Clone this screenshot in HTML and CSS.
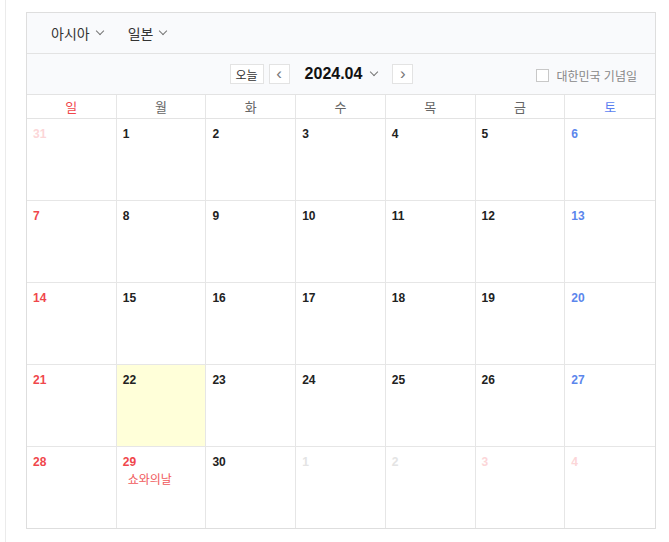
FILE: index.html
```html
<!DOCTYPE html>
<html>
    <head>
        <meta charset="UTF-8">
        <meta name="viewport" content="width=device-width, initial-scale=1.0">
        <link rel="stylesheet" href="styles.css">
        <title>달력</title>
    </head>
    <body>
        <div class="page">
            <div class="calendar">

                <!-- region selectors -->
                <div class="region-bar">
                    <span class="select">아시아 <i class="caret"></i></span>
                    <span class="select">일본 <i class="caret"></i></span>
                </div>

                <!-- month navigation -->
                <div class="nav-bar">
                    <div class="nav-left">
                        <button class="btn today">오늘</button>
                    </div>
                    <div class="nav-mid">
                        <button class="btn arrow">&lsaquo;</button>
                        <span class="month">2024.04 <i class="caret"></i></span>
                        <button class="btn arrow">&rsaquo;</button>
                    </div>
                    <div class="nav-right">
                        <label class="check"><span class="box"></span>대한민국 기념일</label>
                    </div>
                </div>

                <div class="weekdays">
                    <div class="sun">일</div>
                    <div>월</div>
                    <div>화</div>
                    <div>수</div>
                    <div>목</div>
                    <div>금</div>
                    <div class="sat">토</div>
                </div>

                <div class="days">
                    <div class="day sun other">31</div>
                    <div class="day">1</div>
                    <div class="day">2</div>
                    <div class="day">3</div>
                    <div class="day">4</div>
                    <div class="day">5</div>
                    <div class="day sat">6</div>

                    <div class="day sun">7</div>
                    <div class="day">8</div>
                    <div class="day">9</div>
                    <div class="day">10</div>
                    <div class="day">11</div>
                    <div class="day">12</div>
                    <div class="day sat">13</div>

                    <div class="day sun">14</div>
                    <div class="day">15</div>
                    <div class="day">16</div>
                    <div class="day">17</div>
                    <div class="day">18</div>
                    <div class="day">19</div>
                    <div class="day sat">20</div>

                    <div class="day sun">21</div>
                    <div class="day today-cell">22</div>
                    <div class="day">23</div>
                    <div class="day">24</div>
                    <div class="day">25</div>
                    <div class="day">26</div>
                    <div class="day sat">27</div>

                    <div class="day sun">28</div>
                    <div class="day holiday">29<span class="event">쇼와의날</span></div>
                    <div class="day">30</div>
                    <div class="day other">1</div>
                    <div class="day other">2</div>
                    <div class="day other holiday">3</div>
                    <div class="day other holiday">4</div>
                </div>
            </div>
        </div>
    </body>
</html>
```

FILE: styles.css
```css
* {
    box-sizing: border-box;
}

body {
    margin: 0;
    padding-left: 5px;
    background-color: #fff;
    color: #222;
    font-family: "Liberation Sans", "Noto Sans CJK KR", sans-serif;
}

.page {
    border-left: 1px solid #ebebeb;
    padding: 12px 0 14px 20px;
    min-height: 542px;
}

.calendar {
    width: 630px;
    border: 1px solid #dedede;
}

/* top selectors */
.region-bar {
    height: 41px;
    display: flex;
    align-items: center;
    gap: 25px;
    padding-left: 24px;
    background-color: #f9fafc;
    border-bottom: 1px solid #e3e3e3;
    font-size: 14px;
    color: #333;
}

.select {
    display: flex;
    align-items: center;
    gap: 7px;
}

.caret {
    display: inline-block;
    width: 6px;
    height: 6px;
    border-right: 1px solid #777;
    border-bottom: 1px solid #777;
    transform: rotate(45deg);
    margin-top: -4px;
}

/* navigation row */
.nav-bar {
    height: 41px;
    display: grid;
    grid-template-columns: 1fr auto 1fr;
    align-items: center;
    background-color: #f9fafc;
    border-bottom: 1px solid #e3e3e3;
}

.nav-left {
    display: flex;
    justify-content: flex-end;
    padding-right: 5px;
}

.nav-mid {
    display: flex;
    align-items: center;
}

.nav-right {
    display: flex;
    justify-content: flex-end;
    padding-right: 18px;
    padding-top: 3px;
}

.btn {
    height: 20px;
    border: 1px solid #e3e3e3;
    background-color: #fff;
    font-family: inherit;
    color: #333;
    padding: 0;
    cursor: pointer;
}

.today {
    width: 34px;
    font-size: 12px;
}

.arrow {
    width: 21px;
    font-size: 17px;
    line-height: 16px;
    color: #777;
}

.month {
    display: flex;
    align-items: center;
    gap: 9px;
    margin: 0 15px;
    font-size: 16px;
    font-weight: bold;
    color: #111;
}

.check {
    display: flex;
    align-items: center;
    gap: 7px;
    font-size: 12px;
    color: #888;
}

.box {
    width: 13px;
    height: 13px;
    border: 1px solid #c8c8c8;
    background-color: #fff;
}

/* weekday labels */
.weekdays {
    display: grid;
    grid-template-columns: repeat(7, 1fr);
    height: 24px;
    border-bottom: 1px solid #e3e3e3;
}

.weekdays div {
    display: flex;
    align-items: center;
    justify-content: center;
    font-size: 13px;
    color: #666;
    border-right: 1px solid #e6e6e6;
}

.weekdays div:last-child {
    border-right: none;
}

.weekdays .sun {
    color: #f0474c;
}

.weekdays .sat {
    color: #5b7ff0;
}

/* day grid */
.days {
    display: grid;
    grid-template-columns: repeat(7, 1fr);
    grid-template-rows: repeat(4, 82px) 81px;
}

.day {
    padding: 7px 6px;
    font-size: 12px;
    font-weight: bold;
    line-height: 16px;
    border-right: 1px solid #e6e6e6;
    border-bottom: 1px solid #e6e6e6;
}

.day:nth-child(7n) {
    border-right: none;
}

.day:nth-last-child(-n+7) {
    border-bottom: none;
}

.day.sun,
.day.holiday {
    color: #f0474c;
}

.day.sat {
    color: #5b86ec;
}

.day.other {
    color: #e4e4e4;
}

.day.other.sun,
.day.other.holiday {
    color: #fcd6d8;
}

.today-cell {
    background-color: #ffffd9;
}

.event {
    display: block;
    margin: 2px 0 0 5px;
    font-weight: normal;
    color: #f0595c;
}
```
